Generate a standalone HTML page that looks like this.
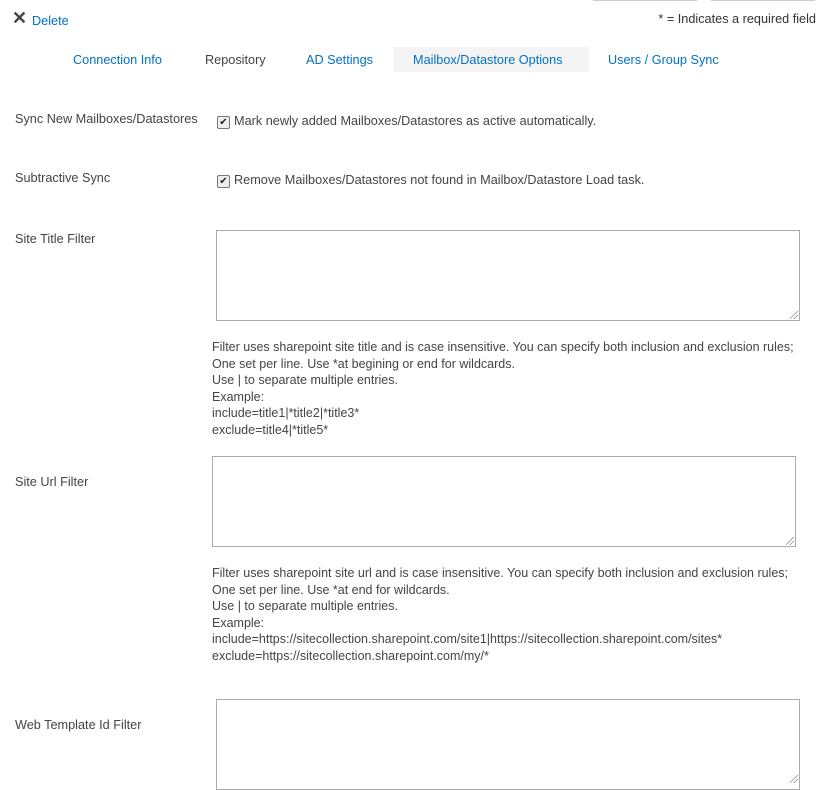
<!DOCTYPE html>
<html><head><style>
body{margin:0;width:826px;height:785px;overflow:hidden;background:#fff;font-family:"Liberation Sans",sans-serif;font-size:12.7px;color:#444;position:relative}
.a{position:absolute;white-space:nowrap}
.blue{color:#0072c6}
.ta{position:absolute;border:1px solid #ababab;background:#fff;box-sizing:border-box}
.cb{display:inline-block;width:11px;height:11px;border:1px solid #777;border-radius:2px;background:#eee;vertical-align:0px;margin-right:4px;position:relative;font-size:10px;line-height:11px;text-align:center;color:#222}
.help{position:absolute;line-height:16.5px;color:#444;font-size:12.5px}
.grip{position:absolute;right:1px;bottom:1px;width:8px;height:8px;background:linear-gradient(135deg,transparent 45%,#888 46%,#888 52%,transparent 53%,transparent 70%,#888 71%,#888 77%,transparent 78%)}
</style></head><body>
<div style="position:absolute;left:593px;top:0;width:104px;height:1px;background:#ccc"></div>
<div style="position:absolute;left:711px;top:0;width:104px;height:1px;background:#ccc"></div>
<div class="a" style="left:12px;top:8px;font-size:18px;color:#444;font-weight:bold">✕</div>
<div class="a blue" style="left:32px;top:14px">Delete</div>
<div class="a" style="right:10px;top:12px;color:#333">* = Indicates a required field</div>
<div style="position:absolute;left:393px;top:47px;width:196px;height:25px;background:#f4f4f4"></div>
<div class="a blue" style="left:73px;top:53px">Connection Info</div>
<div class="a" style="left:205px;top:53px">Repository</div>
<div class="a blue" style="left:306px;top:53px">AD Settings</div>
<div class="a blue" style="left:413px;top:53px">Mailbox/Datastore Options</div>
<div class="a blue" style="left:608px;top:53px">Users / Group Sync</div>

<div class="a" style="left:15px;top:112px">Sync New Mailboxes/Datastores</div>
<div class="a" style="left:217px;top:114px"><span class="cb">✔</span>Mark newly added Mailboxes/Datastores as active automatically.</div>
<div class="a" style="left:15px;top:171px">Subtractive Sync</div>
<div class="a" style="left:217px;top:173px"><span class="cb">✔</span>Remove Mailboxes/Datastores not found in Mailbox/Datastore Load task.</div>

<div class="a" style="left:15px;top:232px">Site Title Filter</div>
<div class="ta" style="left:216px;top:230px;width:584px;height:91px"><div class="grip"></div></div>
<div class="help" style="left:212px;top:339px">Filter uses sharepoint site title and is case insensitive. You can specify both inclusion and exclusion rules;<br>One set per line. Use *at begining or end for wildcards.<br>Use | to separate multiple entries.<br>Example:<br>include=title1|*title2|*title3*<br>exclude=title4|*title5*</div>

<div class="a" style="left:15px;top:475px">Site Url Filter</div>
<div class="ta" style="left:212px;top:456px;width:584px;height:91px"><div class="grip"></div></div>
<div class="help" style="left:212px;top:565px">Filter uses sharepoint site url and is case insensitive. You can specify both inclusion and exclusion rules;<br>One set per line. Use *at end for wildcards.<br>Use | to separate multiple entries.<br>Example:<br>include=https://sitecollection.sharepoint.com/site1|https://sitecollection.sharepoint.com/sites*<br>exclude=https://sitecollection.sharepoint.com/my/*</div>

<div class="a" style="left:15px;top:718px">Web Template Id Filter</div>
<div class="ta" style="left:216px;top:699px;width:584px;height:91px"><div class="grip" style="bottom:6px"></div></div>
</body></html>
